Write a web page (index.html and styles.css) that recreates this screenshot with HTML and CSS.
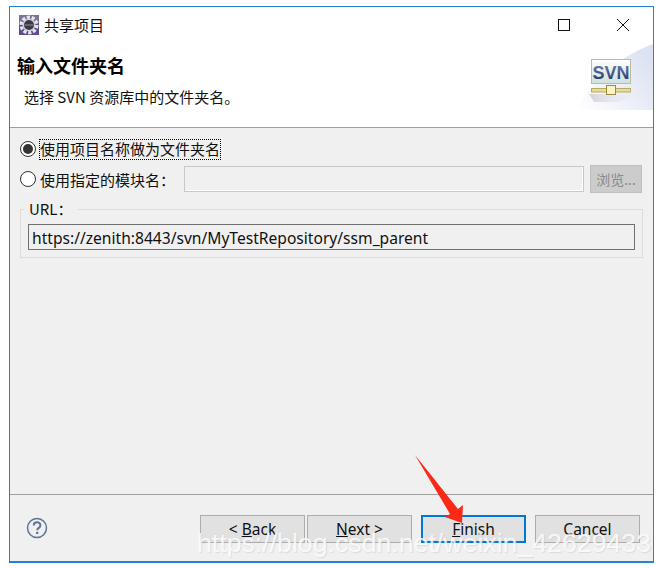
FILE: index.html
```html
<!DOCTYPE html>
<html lang="zh">
<head>
<meta charset="utf-8">
<title>共享项目</title>
<link rel="stylesheet" href="styles.css">
</head>
<body>
<div class="window">
  <div class="titlebar">
    <svg class="app-icon" width="20" height="20" viewBox="0 0 20 20">
      <rect width="20" height="20" fill="#5f4b90"/>
      <path d="M0 0h20v8H0z" fill="#8f8f9c" opacity=".6"/>
      <circle cx="10" cy="10" r="7.800" fill="none" stroke="#e6e6ea" stroke-width="3.400" stroke-dasharray="3.200 1.700"/>
      <circle cx="10" cy="10" r="6.300" fill="#d4d4da"/>
      <circle cx="10" cy="10" r="5" fill="#3b3b45"/>
      <path d="M5.500 10h9" stroke="#666678" stroke-width="2"/>
    </svg>
    <span class="title-text">共享项目</span>
    <div class="win-buttons">
      <span class="win-max"></span>
      <svg class="win-close" width="12" height="12" viewBox="0 0 12 12"><path d="M0 0l12 12M12 0L0 12" stroke="#111" stroke-width="1" fill="none"/></svg>
    </div>
  </div>
  <header class="banner">
    <div class="banner-text">
      <h1>输入文件夹名</h1>
      <p>选择 SVN 资源库中的文件夹名。</p>
    </div>
    <svg class="svn-logo" width="75" height="66" viewBox="0 0 75 66">
      <defs>
        <linearGradient id="bg" x1="0" y1="1" x2="1" y2="0.300"><stop offset="0" stop-color="#fff"/><stop offset="1" stop-color="#dce2f2"/></linearGradient>
        <linearGradient id="scr" x1="0" y1="0" x2="0" y2="1"><stop offset="0" stop-color="#fff"/><stop offset="1" stop-color="#cfe0dc"/></linearGradient>
        <linearGradient id="txt" x1="0" y1="0" x2="0" y2="1"><stop offset="0" stop-color="#6f80ad"/><stop offset="1" stop-color="#1f3068"/></linearGradient>
        <linearGradient id="shd" x1="0" y1="0" x2="1" y2="0"><stop offset="0" stop-color="#d6d2dc"/><stop offset="1" stop-color="#e8e8f2" stop-opacity="0"/></linearGradient>
      </defs>
      <path d="M0 66C10 38 42 12 75 0v66z" fill="url(#bg)"/>
      <path d="M11 50h52l-22 8H16z" fill="url(#shd)"/>
      <rect x="13.500" y="15.500" width="39" height="24" fill="url(#scr)" stroke="#c4b99a"/>
      <text class="svn-text" x="33" y="35" text-anchor="middle" fill="url(#txt)">SVN</text>
      <rect x="13.500" y="44.500" width="39" height="3.500" fill="#e6dd98" stroke="#b5ab60"/>
      <rect x="28.500" y="41.500" width="9" height="9" fill="#fbf3c8" stroke="#9a8c3c"/>
    </svg>
  </header>
  <main class="content">
    <div class="row first-row">
      <span class="radio checked"></span>
      <span class="focus-label">使用项目名称做为文件夹名</span>
    </div>
    <div class="row second-row">
      <span class="radio"></span>
      <span class="module-label">使用指定的模块名：</span>
      <span class="field disabled"></span>
      <span class="browse">浏览...</span>
    </div>
    <div class="group">
      <span class="legend">URL：</span>
      <div class="url-field">https://zenith:8443/svn/MyTestRepository/ssm_parent</div>
    </div>
  </main>
  <footer class="footer">
    <svg class="help" width="22" height="22" viewBox="0 0 22 22">
      <circle cx="11" cy="11" r="9.500" fill="none" stroke="#5f7396" stroke-width="1.500"/>
      <path d="M7.800 8.500c0-4.200 6.600-4.200 6.600 0 0 2.500-3.200 2.300-3.200 4.800" fill="none" stroke="#5f7396" stroke-width="2"/>
      <rect x="10.100" y="14.800" width="2.200" height="2.200" fill="#5f7396"/>
    </svg>
    <div class="buttons">
      <span class="btn back">&lt; <u>B</u>ack</span>
      <span class="btn next"><u>N</u>ext &gt;</span>
      <span class="btn finish"><u>F</u>inish</span>
      <span class="btn cancel">Cancel</span>
    </div>
  </footer>
</div>
<svg class="arrow" width="49" height="69" viewBox="0 0 49 69">
  <path d="M0 0L43 54 48 50 47 68 30 62 35 59z" fill="#fb2a16"/>
</svg>
<div class="watermark">https://blog.csdn.net/weixin_42629433</div>
</body>
</html>
```
FILE: styles.css
```css
* { box-sizing: border-box; }
html, body { margin: 0; height: 100%; background: #fff; overflow: hidden; }
body {
  position: relative;
  padding: 6px 6px 5px 9px;
  font-family: "Noto Sans CJK SC", "Noto Sans", sans-serif;
  font-size: 15px;
  color: #111;
}
.window {
  width: 645px;
  height: 557px;
  border: 1px solid #1f83d8;
  border-bottom-width: 2px;
  display: flex;
  flex-direction: column;
  background: #f0f0f0;
}
.titlebar {
  height: 36px;
  background: #fff;
  display: flex;
  align-items: center;
  padding-left: 9px;
  flex: none;
}
.app-icon { margin-right: 5px; }
.title-text { font-size: 15px; padding-bottom: 2px; }
.win-buttons { margin-left: auto; display: flex; align-items: center; gap: 47px; padding-right: 24px; }
.win-max { width: 12px; height: 12px; border: 1px solid #111; display: block; }
.banner {
  height: 85px;
  background: #fff;
  border-bottom: 1px solid #a0a0a0;
  display: flex;
  flex: none;
  position: relative;
}
.banner-text { padding: 10px 0 0 7px; }
h1 { margin: 0; font-size: 18px; line-height: 24px; font-weight: 700; color: #000; }
p { margin: 10px 0 0 7px; font-size: 15px; line-height: 20px; }
.svn-logo { position: absolute; right: 0; top: 1px; }
.svn-text { font: 700 18px "Liberation Sans", sans-serif; }
.content { flex: 1; padding: 5px 10px 0 10px; }
.row { display: flex; align-items: center; }
.first-row { height: 32px; }
.second-row { height: 28px; }
.radio {
  width: 16px; height: 16px; border-radius: 50%;
  border: 1px solid #333; background: #fff; flex: none; margin-right: 3px;
  display: flex; align-items: center; justify-content: center;
}
.radio.checked::after { content: ""; width: 10px; height: 10px; border-radius: 50%; background: #333; }
.focus-label { outline: 1px dotted #000; line-height: 17px; padding-bottom: 2px; margin-left: 1px; white-space: nowrap; }
.module-label { margin-left: 1px; width: 144px; flex: none; white-space: nowrap; }
.field { width: 400px; height: 26px; border: 1px solid #c8c8c8; box-shadow: inset -1px -1px 0 #fff; display: block; flex: none; }
.browse {
  width: 52px; height: 28px; margin-left: 6px; flex: none;
  background: #cccccc; border: 1px solid #bfbfbf; color: #8a8a8a;
  display: flex; align-items: center; justify-content: center; font-size: 14px;
}
.group {
  position: relative;
  margin-top: 16px;
  height: 49px;
  width: 623px;
  border: 1px solid #dcdcdc;
  padding: 14px 7px 0 7px;
}
.legend { position: absolute; left: 3px; top: -11px; background: #f0f0f0; padding: 0 5px; font-size: 15px; line-height: 19px; }
.url-field {
  height: 26px;
  border: 1px solid #707070;
  padding-left: 3px;
  font: 15.6px/27px "Noto Sans", sans-serif;
  white-space: nowrap;
}
.footer {
  height: 67px;
  flex: none;
  border-top: 1px solid #a0a0a0;
  display: flex;
  position: relative;
  padding: 20px 13px 0 16px;
}
.help { margin-top: 2px; }
.buttons { margin-left: auto; display: flex; }
.btn {
  width: 105px; height: 28px;
  background: #e1e1e1; border: 1px solid #adadad;
  display: flex; align-items: center; justify-content: center; white-space: pre;
  font: 15.5px "Noto Sans", sans-serif;
}
.next { margin-left: 2px; }
.finish { margin-left: 9px; border: 2px solid #0078d7; }
.cancel { margin-left: 9px; }
.arrow { position: absolute; left: 415px; top: 455px; }
.watermark {
  position: absolute; left: 197px; top: 528px;
  font: 26.7px "Liberation Sans", sans-serif;
  color: rgba(255,255,255,.8); white-space: nowrap;
  text-shadow: 1px 1px 1px rgba(190,190,190,.4);
}
```
